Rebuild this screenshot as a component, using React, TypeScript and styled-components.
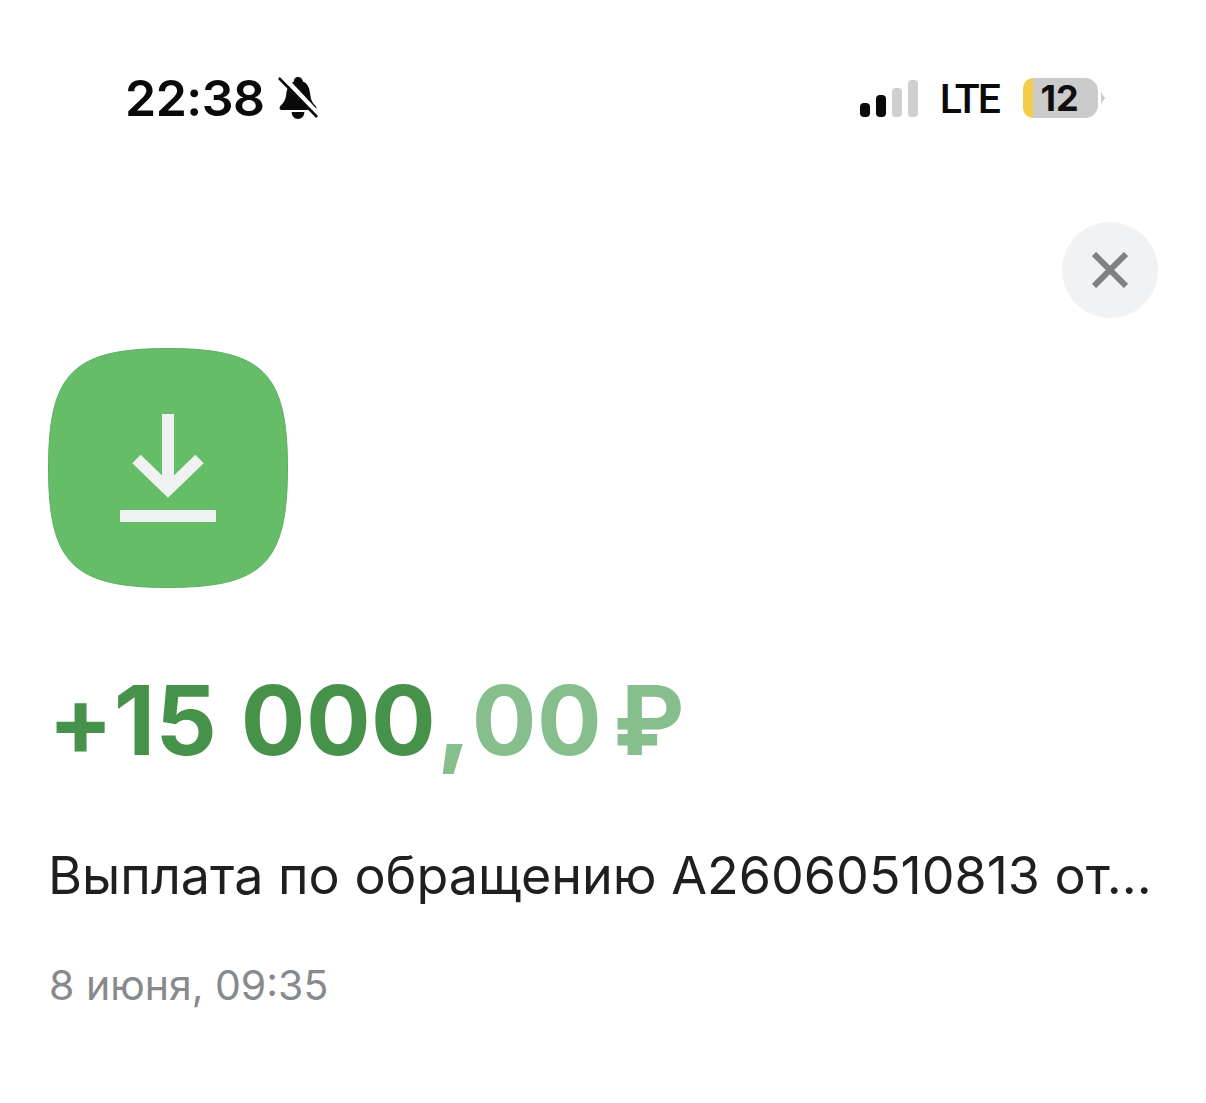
import styled, { createGlobalStyle } from "styled-components";

const GlobalStyle = createGlobalStyle`
    html, body {
        margin: 0;
        padding: 0;
        background: #fff;
    }
    * {
        box-sizing: border-box;
    }
`;

function BellOffIcon() {
    return (
        <svg width="40" height="44" viewBox="0 0 44 44" preserveAspectRatio="none">
            <path
                d="M22 1c3 0 5 2 5.500 4.500C33 7.500 35 13 35.500 19c.4 5 3 8.500 6 11 1.500 2 .5 4-1.500 4H4c-2 0-3-2-1.500-4 3-2.500 6-6 6.500-11 .5-6 3-11.500 8.500-13.500C17 3 19.500 1 22 1z"
                fill="#0a0a0a"
            />
            <path d="M15 36h14c0 4-3 7-7 7s-7-3-7-7z" fill="#0a0a0a" />
            <path d="M4 -1 46 40" stroke="#fff" strokeWidth="5" />
            <path d="M1 2 43 41" stroke="#0a0a0a" strokeWidth="3" />
        </svg>
    );
}

function DepositIcon() {
    return (
        <svg width="240" height="240" viewBox="0 0 240 240">
            <path
                d="M120 .5C215 .5 239.500 25 239.500 120C239.500 215 215 239.500 120 239.500C25 239.500 .5 215 .5 120C.5 25 25 .5 120 .5Z"
                fill="#65bd68"
                stroke="#5fae64"
            />
            <path d="M120 66v78" stroke="#f0f1f1" strokeWidth="12" fill="none" />
            <path d="M88.500 111 120 141.500 151.500 111" stroke="#f0f1f1" strokeWidth="12" fill="none" />
            <path d="M72 168h96" stroke="#f0f1f1" strokeWidth="12" fill="none" />
        </svg>
    );
}

function CloseIcon() {
    return (
        <svg width="36" height="36" viewBox="0 0 36 36">
            <path d="M2 2 34 34M34 2 2 34" stroke="#808184" strokeWidth="6" fill="none" />
        </svg>
    );
}

const bars = [
    { height: 14, on: true },
    { height: 22, on: true },
    { height: 29, on: false },
    { height: 37, on: false },
];

export default function App() {
    return (
        <Page>
            <GlobalStyle />
            <StatusBar>
                <TimeGroup>
                    <Time>22:38</Time>
                    <BellOffIcon />
                </TimeGroup>
                <Indicators>
                    <Signal>
                        {bars.map(bar => (
                            <SignalBar key={bar.height} $height={bar.height} $on={bar.on} />
                        ))}
                    </Signal>
                    <Network>LTE</Network>
                    <Battery>
                        <BatteryLevel />
                        <BatteryValue>12</BatteryValue>
                    </Battery>
                    <BatteryTip />
                </Indicators>
            </StatusBar>

            <CloseRow>
                <CloseButton>
                    <CloseIcon />
                </CloseButton>
            </CloseRow>

            <Content>
                <DepositIcon />
                <Amount>
                    +15 000
                    <Kopecks>
                        <Comma>,</Comma>00
                    </Kopecks>
                    <Currency>₽</Currency>
                </Amount>
                <Description>Выплата по обращению А26060510813 от...</Description>
                <DateText>8 июня, 09:35</DateText>
            </Content>
        </Page>
    );
}

const Page = styled.div`
    width: 1206px;
    height: 1103px;
    overflow: hidden;
    background: #fff;
    display: flex;
    flex-direction: column;
    font-family: Inter, "Liberation Sans", sans-serif;
`;

const StatusBar = styled.div`
    display: flex;
    justify-content: space-between;
    align-items: center;
    height: 44px;
    margin-top: 76px;
    padding: 0 101px 0 125px;
`;

const TimeGroup = styled.div`
    display: flex;
    align-items: center;
    gap: 13px;
`;

const Time = styled.span`
    font-size: 50px;
    font-weight: 600;
    letter-spacing: -0.5px;
    line-height: 44px;
    color: #0a0a0a;
`;

const Indicators = styled.div`
    display: flex;
    align-items: center;
`;

const Signal = styled.div`
    display: flex;
    align-items: flex-end;
    gap: 6px;
    height: 37px;
    margin-right: 22px;
`;

const SignalBar = styled.div<{ $height: number; $on: boolean }>`
    width: 10px;
    height: ${props => props.$height}px;
    border-radius: 4px;
    background: ${props => (props.$on ? "#0a0a0a" : "#cfcfd0")};
`;

const Network = styled.span`
    font-family: Roboto, "Liberation Sans", sans-serif;
    font-size: 41px;
    font-weight: 500;
    letter-spacing: -2px;
    line-height: 48px;
    padding-top: 2px;
    color: #0a0a0a;
    margin-right: 24px;
`;

const Battery = styled.div`
    position: relative;
    width: 75px;
    height: 40px;
    border-radius: 13px;
    background: #cbcbcc;
    display: flex;
    align-items: center;
    justify-content: center;
`;

const BatteryLevel = styled.div`
    position: absolute;
    left: 0;
    top: 0;
    bottom: 0;
    width: 10px;
    border-radius: 13px 0 0 13px;
    background: #f5cb4d;
`;

const BatteryValue = styled.span`
    font-size: 36px;
    font-weight: 700;
    color: #0f0f0f;
    line-height: 40px;
    margin-right: 2px;
`;

const BatteryTip = styled.div`
    width: 0;
    height: 0;
    margin-left: 3px;
    border-top: 6px solid transparent;
    border-bottom: 6px solid transparent;
    border-left: 4px solid #cbcbcc;
`;

const CloseRow = styled.div`
    display: flex;
    justify-content: flex-end;
    margin-top: 102px;
    padding-right: 48px;
`;

const CloseButton = styled.div`
    width: 96px;
    height: 96px;
    border-radius: 50%;
    background: #f1f2f4;
    display: flex;
    align-items: center;
    justify-content: center;
`;

const Content = styled.div`
    display: flex;
    flex-direction: column;
    align-items: flex-start;
    margin-top: 30px;
    padding-left: 48px;
`;

const Amount = styled.div`
    margin-top: 80px;
    font-size: 96px;
    font-weight: 700;
    letter-spacing: 0.500px;
    line-height: 104px;
    color: #47924a;
    white-space: pre;
`;

const Kopecks = styled.span`
    color: #86be8e;
    letter-spacing: 0.500px;
`;

const Comma = styled.span`
    font-weight: 800;
    margin: 0 0 0 1px;
`;

const Currency = styled.span`
    color: #86be8e;
    margin-left: 11px;
`;

const Description = styled.div`
    margin-top: 74px;
    font-size: 52px;
    line-height: 60px;
    color: #1f1f22;
    white-space: nowrap;
`;

const DateText = styled.div`
    margin-top: 55px;
    margin-left: 1px;
    font-size: 41px;
    line-height: 48px;
    color: #88898d;
`;
